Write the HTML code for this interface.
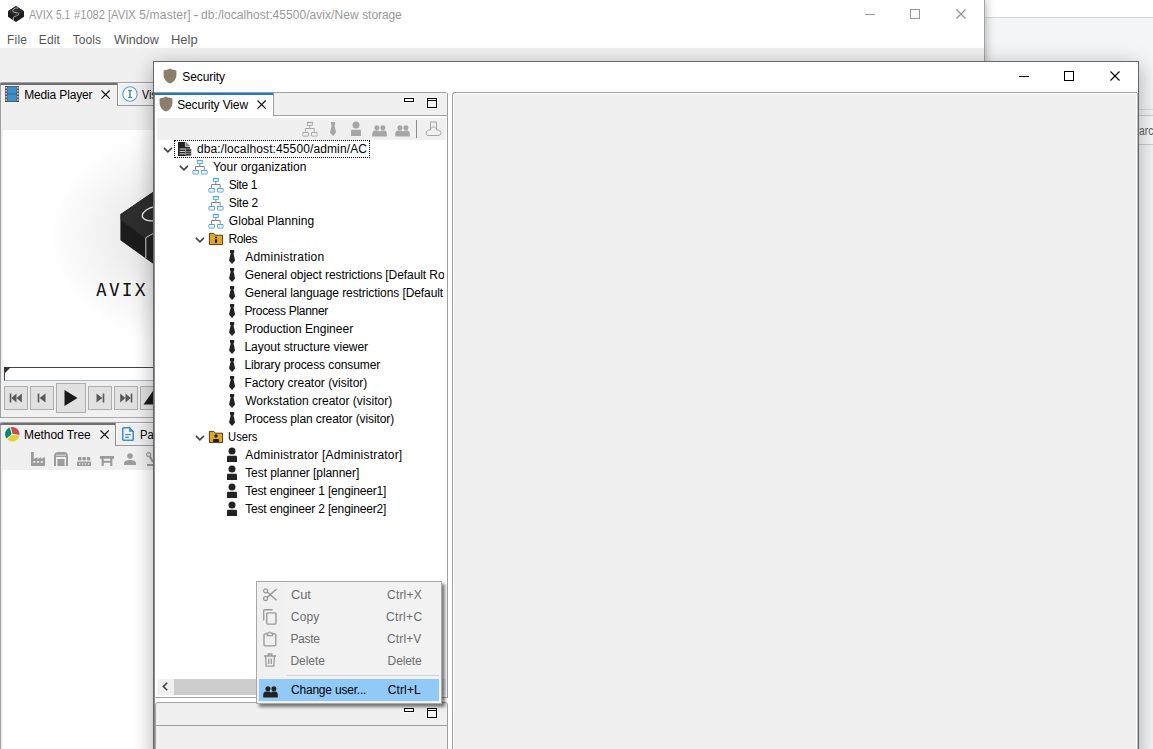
<!DOCTYPE html>
<html lang="en"><head><meta charset="utf-8"><title>AVIX Security</title>
<style>
html,body{margin:0;padding:0}
body{width:1153px;height:749px;overflow:hidden;position:relative;background:#f4f5f7;font-family:"Liberation Sans", sans-serif;font-size:12px}
div,span,svg{position:absolute;box-sizing:border-box}
.t{white-space:pre;line-height:18px;height:18px}
.i{overflow:visible}
.clip{overflow:hidden}
</style></head>
<body>
<div style="left:985px;top:0;width:168px;height:17px;background:#fff"></div>
<div style="left:985px;top:17px;width:168px;height:1px;background:#d6d6d6"></div>
<div style="left:1139px;top:109px;width:14px;height:1px;background:#dcdcdc"></div>
<div style="left:1139px;top:115px;width:14px;height:30px;background:#f8f9fa;border-top:1px solid #cfcfcf;border-bottom:1px solid #cfcfcf"></div>
<span class="t " style="left:1139.49px;transform-origin:0 0;transform:scaleX(0.8581);top:121.5px;color:#5f6368;font-size:12px;">arc</span>
<div id="main" style="left:0;top:0;width:985px;height:760px;background:#f0f0f0;border-right:1px solid #a2a2a2;box-shadow:0 0 10px rgba(0,0,0,.35)">
<div style="left:0;top:0;width:984px;height:48px;background:#fff"></div>
<svg class="i" style="left:8px;top:6px" width="16" height="16" viewBox="0 0 16 16" ><path d="M8 0 L16 5.2 V10.8 L8 16 L0 10.8 V5.2Z" fill="#1c1c1c"/><path d="M8 0 L16 5.2 L8 10.6 L0 5.2Z" fill="#2e2e2e"/><path d="M10.2 2.2 C7.5 1.4 4.4 3.4 4.8 5.2 C5.2 7 10.6 6.2 10.8 7.9 C11 9.6 7 10 5.4 11.3 V14.2" stroke="#c8c8c8" stroke-width="0.8" fill="none"/></svg>
<span class="t " style="left:29.21px;transform-origin:0 0;transform:scaleX(0.9027);top:5.5px;color:#999;font-size:12px;">AVIX </span>
<span class="t " style="left:56.09px;transform-origin:0 0;transform:scaleX(0.8380);top:5.5px;color:#999;font-size:12px;">5.1 </span>
<span class="t " style="left:73.66px;transform-origin:0 0;transform:scaleX(0.9300);top:5.5px;color:#999;font-size:12px;">#1082 </span>
<span class="t " style="left:108.45px;transform-origin:0 0;transform:scaleX(0.9331);top:5.5px;color:#999;font-size:12px;">[AVIX </span>
<span class="t " style="left:139.27px;letter-spacing:0.175px;top:5.5px;color:#999;font-size:12px;">5/master] </span>
<span class="t " style="left:193.35px;transform-origin:0 0;transform:scaleX(1.4109);top:5.5px;color:#999;font-size:12px;">- </span>
<span class="t " style="left:201.12px;letter-spacing:0.050px;top:5.5px;color:#999;font-size:12px;">db:/localhost:45500/avix/New </span>
<span class="t " style="left:362.19px;letter-spacing:-0.073px;top:5.5px;color:#999;font-size:12px;">storage</span>
<div style="left:865px;top:14px;width:10px;height:1px;background:#999"></div>
<div style="left:910px;top:9px;width:10px;height:10px;border:1px solid #999"></div>
<svg class="i" style="left:956px;top:9px" width="10" height="10" viewBox="0 0 10 10" ><path d="M0.5 0.5 L9.5 9.5 M9.5 0.5 L0.5 9.5" stroke="#8e8e8e" stroke-width="1.1" fill="none"/></svg>
<span class="t " style="left:7.08px;letter-spacing:0.186px;top:30.5px;color:#565656;font-size:12px;">File</span>
<span class="t " style="left:38.78px;letter-spacing:0.148px;top:30.5px;color:#565656;font-size:12px;">Edit</span>
<span class="t " style="left:72.67px;letter-spacing:0.063px;top:30.5px;color:#565656;font-size:12px;">Tools</span>
<span class="t " style="left:113.70px;transform-origin:0 0;transform:scaleX(1.0512);top:30.5px;color:#565656;font-size:12px;">Window</span>
<span class="t " style="left:171.29px;transform-origin:0 0;transform:scaleX(1.0796);top:30.5px;color:#565656;font-size:12px;">Help</span>
<div style="left:0px;top:82px;width:990px;height:336px;border-left:1px solid #a0a0a0;border-bottom:1px solid #a8a8a8;border-top:1px solid #a0a0a0;border-radius:2px 0 0 0;background:#f0f0f0"></div>
<div style="left:0px;top:83px;width:117px;height:2px;background:#6e6e6e;border-radius:2px 0 0 0"></div>
<div style="left:117px;top:83px;width:880px;height:23px;border-left:1px solid #8e8e8e;border-bottom:1px solid #9a9a9a;background:#f0f0f0"><div style="left:0;top:0;width:880px;height:1px;background:#fbfbfb"></div><div style="left:0;top:0;width:1px;height:22px;background:#fbfbfb"></div></div>
<svg class="i" style="left:5px;top:86px" width="14" height="16" viewBox="0 0 14 16" ><rect x="0" y="0" width="14" height="16" fill="#555"/><rect x="2.5" y="0.8" width="9" height="6.8" fill="#3a8fcd"/><rect x="2.5" y="8.4" width="9" height="6.8" fill="#3a8fcd"/><g fill="#ddd"><rect x="0.6" y="1" width="1.2" height="1.6"/><rect x="0.6" y="4" width="1.2" height="1.6"/><rect x="0.6" y="7" width="1.2" height="1.6"/><rect x="0.6" y="10" width="1.2" height="1.6"/><rect x="0.6" y="13" width="1.2" height="1.6"/><rect x="12.2" y="1" width="1.2" height="1.6"/><rect x="12.2" y="4" width="1.2" height="1.6"/><rect x="12.2" y="7" width="1.2" height="1.6"/><rect x="12.2" y="10" width="1.2" height="1.6"/><rect x="12.2" y="13" width="1.2" height="1.6"/></g></svg>
<span class="t " style="left:24.18px;letter-spacing:-0.149px;top:85.5px;color:#000;font-size:12px;">Media Player</span>
<svg class="i" style="left:101px;top:90px" width="9.2" height="9.2" viewBox="0 0 9.2 9.2" ><path d="M0.5 0.5 L8.7 8.7 M8.7 0.5 L0.5 8.7" stroke="#111" stroke-width="1.2" fill="none"/></svg>
<svg class="i" style="left:122px;top:86px" width="16" height="16" viewBox="0 0 16 16" ><circle cx="8" cy="8" r="7.2" fill="#fff" stroke="#5a9fd6" stroke-width="1.1"/><path d="M6 4.5 H10 M6 11.5 H10" stroke="#3a88cb" stroke-width="1"/><path d="M8 4.5 V11.5" stroke="#3a88cb" stroke-width="1.5"/></svg>
<span class="t " style="left:141.71px;transform-origin:0 0;transform:scaleX(0.8832);top:85.5px;color:#000;font-size:12px;">Vis</span>
<div style="left:3px;top:130px;width:990px;height:237px;background:radial-gradient(ellipse 132px 108px at 177px 106px,#e2e2e2 0%,#e6e6e6 25%,#f4f4f4 65%,#fff 100%)"></div>
<svg class="i" style="left:120px;top:185px" width="34" height="85" viewBox="0 0 34 85" ><path d="M1.2 29.6 L34 7.2 V78.4 L1.2 54.8Z" fill="#1c1c1c" stroke="#1c1c1c" stroke-width="1.6" stroke-linejoin="round"/><path d="M1.2 29.6 L34 7.2 V48 L25.8 52.7 L1.2 34.4Z" fill="#2e2e2e" stroke="#2e2e2e" stroke-width="1.2" stroke-linejoin="round"/><path d="M25.8 52.7 L34 48 V78.4 L25.8 73.2Z" fill="#242424"/><path d="M25.8 73 V52.7 L34 48" stroke="#dcdcdc" stroke-width="1" fill="none"/><path d="M34 21.6 C28 23 22.4 27 22.2 30.6 C22.1 34.2 28 36.6 34 35.6" stroke="#f4f4f4" stroke-width="1.25" fill="none"/></svg>
<span class="t" style="left:96px;top:280.4px;font-family:'DejaVu Sans Mono',monospace;font-size:17.8px;letter-spacing:2.2px;color:#111;line-height:20px;height:20px">AVIX 5</span>
<div style="left:4px;top:367px;width:990px;height:14px;background:#fff;border-top:1px solid #444;border-left:1px solid #444;border-bottom:1px solid #a9b9cc"></div>
<svg class="i" style="left:4px;top:367px" width="7" height="7" viewBox="0 0 7 7" ><path d="M0 0 H7 L0 7Z" fill="#333"/></svg>
<div style="left:4px;top:386px;width:24px;height:24px;background:#e1e1e1;border:1px solid #adadad"></div>
<svg class="i" style="left:4px;top:386px" width="24" height="24" viewBox="0 0 24 24" ><path d="M6.5 7.5 V16.5" stroke="#585858" stroke-width="1.6"/><path d="M12.5 7.5 V16.5 L7.3 12Z M17.8 7.5 V16.5 L12.6 12Z" fill="#585858"/></svg>
<div style="left:30px;top:386px;width:24px;height:24px;background:#e1e1e1;border:1px solid #adadad"></div>
<svg class="i" style="left:30px;top:386px" width="24" height="24" viewBox="0 0 24 24" ><path d="M8.5 7.5 V16.5" stroke="#585858" stroke-width="1.6"/><path d="M15.5 7.5 V16.5 L9.6 12Z" fill="#585858"/></svg>
<div style="left:56px;top:383px;width:30px;height:30px;background:#e1e1e1;border:1px solid #adadad"></div>
<svg class="i" style="left:56px;top:383px" width="30" height="30" viewBox="0 0 30 30" ><path d="M8.5 7 V23 L21.5 15Z" fill="#1a1a1a"/></svg>
<div style="left:88px;top:386px;width:24px;height:24px;background:#e1e1e1;border:1px solid #adadad"></div>
<svg class="i" style="left:88px;top:386px" width="24" height="24" viewBox="0 0 24 24" ><path d="M15.5 7.5 V16.5" stroke="#585858" stroke-width="1.6"/><path d="M8.5 7.5 V16.5 L14.4 12Z" fill="#585858"/></svg>
<div style="left:114px;top:386px;width:24px;height:24px;background:#e1e1e1;border:1px solid #adadad"></div>
<svg class="i" style="left:114px;top:386px" width="24" height="24" viewBox="0 0 24 24" ><path d="M17.5 7.5 V16.5" stroke="#585858" stroke-width="1.6"/><path d="M6.2 7.5 V16.5 L11.4 12Z M11.5 7.5 V16.5 L16.7 12Z" fill="#585858"/></svg>
<div style="left:140px;top:386px;width:24px;height:24px;background:#e1e1e1;border:1px solid #adadad"></div>
<svg class="i" style="left:140px;top:386px" width="24" height="24" viewBox="0 0 24 24" ><path d="M3.5 18.5 L13 5 L22.5 18.5Z" fill="#1a1a1a"/></svg>
<div style="left:0px;top:422px;width:990px;height:340px;border-left:1px solid #a0a0a0;border-top:1px solid #a0a0a0;border-radius:2px 0 0 0;background:#f0f0f0"></div>
<div style="left:0px;top:423px;width:115px;height:2px;background:#6e6e6e;border-radius:2px 0 0 0"></div>
<div style="left:115px;top:423px;width:880px;height:23px;border-left:1px solid #8e8e8e;border-bottom:1px solid #9a9a9a;background:#f0f0f0"><div style="left:0;top:0;width:880px;height:1px;background:#fbfbfb"></div><div style="left:0;top:0;width:1px;height:22px;background:#fbfbfb"></div></div>
<svg class="i" style="left:4.8px;top:426.9px" width="15" height="15" viewBox="0 0 15 15" ><path d="M7.3 7.2 L5.15 0.33 A7.2 7.2 0 0 1 14.37 8.54Z" fill="#cf4a50"/><path d="M7.3 7.2 L14.37 8.54 A7.2 7.2 0 0 1 1.95 12.02Z" fill="#e8cf2b"/><path d="M7.3 7.2 L1.95 12.02 A7.2 7.2 0 0 1 5.15 0.33Z" fill="#0b8a6b"/><path d="M7.3 7.2 L5.15 0.33 M7.3 7.2 L14.37 8.54 M7.3 7.2 L1.95 12.02 " stroke="#f4f4f4" stroke-width="1.1" fill="none"/></svg>
<span class="t " style="left:24.08px;letter-spacing:-0.074px;top:425.5px;color:#000;font-size:12px;">Method Tree</span>
<svg class="i" style="left:99.5px;top:430.3px" width="9.2" height="9.2" viewBox="0 0 9.2 9.2" ><path d="M0.5 0.5 L8.7 8.7 M8.7 0.5 L0.5 8.7" stroke="#111" stroke-width="1.2" fill="none"/></svg>
<svg class="i" style="left:122px;top:427px" width="12" height="14" viewBox="0 0 12 14" ><path d="M1.6 0.75 H7.4 L11.25 4.6 V12.4 C11.25 12.9 10.9 13.25 10.4 13.25 H1.6 C1.1 13.25 0.75 12.9 0.75 12.4 V1.6 C0.75 1.1 1.1 0.75 1.6 0.75Z" fill="none" stroke="#3a8dcc" stroke-width="1.5"/><path d="M7.2 0.9 V4.8 H11.1Z" fill="#3a8dcc"/><path d="M3.2 7.6 H8.8 M3.2 10.4 H6.8" stroke="#3a8dcc" stroke-width="1.2"/></svg>
<span class="t " style="left:139.96px;transform-origin:0 0;transform:scaleX(0.9320);top:425.5px;color:#000;font-size:12px;">Pa</span>
<svg class="i" style="left:31px;top:452px" width="14" height="14" viewBox="0 0 14 14" ><path d="M0 14 V0 H2.8 V7 L6.4 5 V7 L10.2 5 V7 L14 5 V14Z" fill="#9c9c9c"/><g fill="#f0f0f0"><rect x="2.4" y="9" width="1.8" height="1.8"/><rect x="6.1" y="9" width="1.8" height="1.8"/><rect x="9.8" y="9" width="1.8" height="1.8"/></g></svg>
<svg class="i" style="left:54px;top:452px" width="14" height="14" viewBox="0 0 14 14" ><path d="M0 14 V4 C0 1.5 2 0 4 0 H10 C12 0 14 1.5 14 4 V14 H12 V5 H2 V14Z" fill="#9c9c9c"/><rect x="3.4" y="7" width="7.2" height="7" fill="#9c9c9c"/><path d="M2 3.2 H12" stroke="#f0f0f0" stroke-width="0.8"/></svg>
<svg class="i" style="left:77px;top:457px" width="14" height="9" viewBox="0 0 14 9" ><g fill="#9c9c9c"><rect x="1" y="0" width="3.4" height="3.4"/><rect x="5.4" y="0" width="3.4" height="3.4"/><rect x="9.8" y="0" width="3.4" height="3.4"/><rect x="0" y="4.6" width="14" height="4.4"/></g><g fill="#f0f0f0"><rect x="2" y="6.2" width="1.2" height="1.4"/><rect x="5" y="6.2" width="1.2" height="1.4"/><rect x="8" y="6.2" width="1.2" height="1.4"/><rect x="11" y="6.2" width="1.2" height="1.4"/></g></svg>
<svg class="i" style="left:100px;top:456px" width="14" height="10" viewBox="0 0 14 10" ><path d="M0 0 H14 V2.8 H12.4 V10 H10.2 V6.8 H3.8 V10 H1.6 V2.8 H0Z M3.8 2.8 V4.8 H10.2 V2.8Z" fill="#9c9c9c" fill-rule="evenodd"/></svg>
<svg class="i" style="left:124px;top:453px" width="12" height="12" viewBox="0 0 12 12" ><circle cx="6" cy="3" r="2.8" fill="#9c9c9c"/><path d="M0 12 V10.4 C0 8.2 3 7 6 7 C9 7 12 8.2 12 10.4 V12Z" fill="#9c9c9c"/></svg>
<svg class="i" style="left:146px;top:452px" width="12" height="14" viewBox="0 0 12 14" ><circle cx="2.6" cy="2.6" r="2" fill="none" stroke="#9c9c9c" stroke-width="1.2"/><path d="M3.6 4 L7 10 M1 13 H12" stroke="#9c9c9c" stroke-width="2"/></svg>
<div style="left:3px;top:470px;width:990px;height:300px;background:#fff"></div>
</div>
<div id="sec" style="left:153px;top:61px;width:986px;height:700px;background:#fff;border:1px solid #666;box-shadow:0 5px 20px rgba(0,0,0,.32)"></div>
<div style="left:154px;top:92px;width:1px;height:700px;background:#8c8c8c"></div>
<div style="left:1137px;top:93px;width:1px;height:700px;background:#bdbdbd"></div>
<svg class="i" style="left:163px;top:68px" width="14" height="16" viewBox="0 0 14 16" ><path d="M7 0.6 C5 1.6 3 2.2 0.6 2.4 V7 C0.6 11 3.2 14 7 15.6 C10.8 14 13.4 11 13.4 7 V2.4 C11 2.2 9 1.6 7 0.6Z" fill="#8c7f69"/></svg>
<span class="t " style="left:182.20px;letter-spacing:-0.059px;top:67.5px;color:#000;font-size:12px;">Security</span>
<div style="left:1019px;top:76px;width:10px;height:1px;background:#000"></div>
<div style="left:1064px;top:71px;width:10px;height:10px;border:1px solid #000"></div>
<svg class="i" style="left:1110px;top:71px" width="10" height="10" viewBox="0 0 10 10" ><path d="M0.5 0.5 L9.5 9.5 M9.5 0.5 L0.5 9.5" stroke="#000" stroke-width="1.1" fill="none"/></svg>
<div style="left:155px;top:92px;width:293px;height:606px;border:1px solid #a0a0a0;border-left-color:#fff;border-radius:0 3px 0 0;background:#fff"></div>
<div style="left:156px;top:93px;width:291px;height:23px;background:#f0f0f0;border-bottom:1px solid #a0a0a0"></div>
<div style="left:155px;top:92px;width:119px;height:24px;background:#fff;border-right:1px solid #a0a0a0"></div>
<div style="left:154px;top:92px;width:120px;height:1px;background:#a29d95"></div>
<div style="left:154px;top:93px;width:119px;height:2px;background:#1b76d2"></div>
<svg class="i" style="left:159px;top:96px" width="14" height="16" viewBox="0 0 14 16" ><path d="M7 0.6 C5 1.6 3 2.2 0.6 2.4 V7 C0.6 11 3.2 14 7 15.6 C10.8 14 13.4 11 13.4 7 V2.4 C11 2.2 9 1.6 7 0.6Z" fill="#8c7f69"/></svg>
<span class="t " style="left:177.20px;letter-spacing:-0.135px;top:95.5px;color:#000;font-size:12px;">Security View</span>
<svg class="i" style="left:257px;top:99.7px" width="9.2" height="9.2" viewBox="0 0 9.2 9.2" ><path d="M0.5 0.5 L8.7 8.7 M8.7 0.5 L0.5 8.7" stroke="#111" stroke-width="1.2" fill="none"/></svg>
<div style="left:404px;top:98px;width:10px;height:4px;border:1px solid #000;background:#fff;box-shadow:0 0 0 1px rgba(255,255,255,.6)"></div>
<div style="left:427px;top:98px;width:10px;height:10px;border:1px solid #000;background:#f4f4f4;box-shadow:0 0 0 1px rgba(255,255,255,.6)"><div style="left:0;top:0;width:8px;height:1px;background:#fff"></div><div style="left:0;top:1px;width:8px;height:1px;background:#000"></div></div>
<div style="left:157px;top:118px;width:289px;height:22px;background:#f0f0f0"></div>
<svg class="i" style="left:302px;top:121px" width="16" height="16" viewBox="0 0 16 16" ><path d="M7.8 4.6 V7.5 M3.5 10.8 V7.5 H12.2 V10.8" stroke="#a6a6a6" stroke-width="1" fill="none"/><rect x="5.3" y="1.5" width="5" height="3" fill="#f0f0f0" stroke="#a6a6a6" stroke-width="0.9"/><path d="M4.9 1.5 H10.7" stroke="#a6a6a6" stroke-width="1.3"/><rect x="0.9" y="11.5" width="5.6" height="3.6" rx="0.4" fill="#f0f0f0" stroke="#a6a6a6" stroke-width="0.9"/><rect x="9.5" y="11.5" width="5.6" height="3.6" rx="0.4" fill="#f0f0f0" stroke="#a6a6a6" stroke-width="0.9"/><path d="M0.9 11.5 H6.5 M9.5 11.5 H15.1" stroke="#a6a6a6" stroke-width="1.2"/></svg>
<svg class="i" style="left:325px;top:121px" width="16" height="16" viewBox="0 0 16 16" ><path d="M6 0.9 H10.2 V3.5 L9.5 4.4 L11 11 C11 11.6 10.8 11.9 10.5 12.3 L8.05 14.9 L5.6 12.3 C5.3 11.9 5.1 11.6 5.1 11 L6.7 4.4 L6 3.5Z" fill="#a6a6a6"/></svg>
<svg class="i" style="left:348px;top:121px" width="16" height="16" viewBox="0 0 16 16" ><circle cx="8" cy="3.9" r="3.5" fill="#a6a6a6"/><path d="M3 15 V9.9 C3 9.1 3.6 8.7 4.3 8.7 H11.7 C12.4 8.7 13 9.1 13 9.9 V15Z" fill="#a6a6a6"/></svg>
<svg class="i" style="left:371.7px;top:124.6px" width="15" height="12" viewBox="0 0 15 12" ><circle cx="4.9" cy="2.7" r="2.5" fill="#a6a6a6"/><circle cx="10.9" cy="2.7" r="2.5" fill="#a6a6a6"/><path d="M0.2 11.6 V9 C0.2 7 1.4 5.6 3 5.6 H6 C7 5.6 7.7 6.2 8 7 C8.3 6.2 9 5.6 10 5.6 H12.4 C13.8 5.6 14.8 7 14.8 9 V11.6Z" fill="#a6a6a6"/></svg>
<svg class="i" style="left:394.7px;top:124.6px" width="15" height="12" viewBox="0 0 15 12" ><circle cx="4.9" cy="2.7" r="2.5" fill="#a6a6a6"/><circle cx="10.9" cy="2.7" r="2.5" fill="#a6a6a6"/><path d="M0.2 11.6 V9 C0.2 7 1.4 5.6 3 5.6 H6 C7 5.6 7.7 6.2 8 7 C8.3 6.2 9 5.6 10 5.6 H12.4 C13.8 5.6 14.8 7 14.8 9 V11.6Z" fill="#a6a6a6"/></svg>
<div style="left:416px;top:120px;width:1px;height:18px;background:#8c8c8c"></div>
<svg class="i" style="left:425px;top:121px" width="16" height="16" viewBox="0 0 16 16" ><path d="M5.5 9 V1 H11.5 V9" fill="none" stroke="#a6a6a6" stroke-width="1"/><path d="M8.5 6 C6.5 6 5.8 7.4 5.4 8.8 C2.6 9 1 10.4 1 12 C1 13.6 2.2 14.5 4 14.5 H13 C14.8 14.5 16 13.6 16 12 C16 10.4 14.4 9 11.6 8.8 C11.2 7.4 10.5 6 8.5 6Z" fill="#f0f0f0" stroke="#a6a6a6" stroke-width="1"/></svg>
<div class="clip" style="left:0;top:0;width:444px;height:678px">
<div style="left:174px;top:140px;width:196px;height:18px;border:1px dotted #000"></div>
<svg class="i" style="left:162.5px;top:146.5px" width="10" height="6" viewBox="0 0 10 6" ><path d="M0.9 0.9 L4.9 4.9 L8.9 0.9" stroke="#404040" stroke-width="1.5" fill="none"/></svg>
<svg class="i" style="left:176px;top:141px" width="16" height="16" viewBox="0 0 16 16" ><path d="M2 1 H9.6 L14 5.4 V15 H2Z" fill="#232323"/><path d="M9.6 1 V5.4 H14Z" fill="#8a8a8a"/><path d="M9.4 0.8 V5.6 H14.2" fill="none" stroke="#fff" stroke-width="0.7"/><path d="M3.6 8 H10 M3.6 10.4 H9 M3.6 12.8 H9" stroke="#f4f4f4" stroke-width="0.9"/><path d="M9.6 8.6 C9.6 7.6 15.4 7.6 15.4 8.6 V14 C15.4 15.2 9.6 15.2 9.6 14Z" fill="#2a2a2a" stroke="#fff" stroke-width="0.5"/><path d="M9.8 10.2 C10.8 11 14.2 11 15.2 10.2 M9.8 12.2 C10.8 13 14.2 13 15.2 12.2" stroke="#bbb" stroke-width="0.7" fill="none"/></svg>
<span class="t " style="left:196.92px;letter-spacing:0.116px;top:140px;color:#000;font-size:12px;">dba:/localhost:45500/admin/AC</span>
<svg class="i" style="left:178.5px;top:164.5px" width="10" height="6" viewBox="0 0 10 6" ><path d="M0.9 0.9 L4.9 4.9 L8.9 0.9" stroke="#404040" stroke-width="1.5" fill="none"/></svg>
<svg class="i" style="left:192px;top:159px" width="16" height="16" viewBox="0 0 16 16" ><path d="M7.8 4.6 V7.5 M3.5 10.8 V7.5 H12.2 V10.8" stroke="#858585" stroke-width="1" fill="none"/><rect x="5.3" y="1.5" width="5" height="3" fill="#eef6fc" stroke="#5aa3dc" stroke-width="0.9"/><path d="M4.9 1.5 H10.7" stroke="#5aa3dc" stroke-width="1.3"/><rect x="0.9" y="11.5" width="5.6" height="3.6" rx="0.4" fill="#eef6fc" stroke="#5aa3dc" stroke-width="0.9"/><rect x="9.5" y="11.5" width="5.6" height="3.6" rx="0.4" fill="#eef6fc" stroke="#5aa3dc" stroke-width="0.9"/><path d="M0.9 11.5 H6.5 M9.5 11.5 H15.1" stroke="#5aa3dc" stroke-width="1.2"/></svg>
<span class="t " style="left:212.90px;letter-spacing:0.033px;top:158px;color:#000;font-size:12px;">Your organization</span>
<svg class="i" style="left:208px;top:177px" width="16" height="16" viewBox="0 0 16 16" ><path d="M7.8 4.6 V7.5 M3.5 10.8 V7.5 H12.2 V10.8" stroke="#858585" stroke-width="1" fill="none"/><rect x="5.3" y="1.5" width="5" height="3" fill="#eef6fc" stroke="#5aa3dc" stroke-width="0.9"/><path d="M4.9 1.5 H10.7" stroke="#5aa3dc" stroke-width="1.3"/><rect x="0.9" y="11.5" width="5.6" height="3.6" rx="0.4" fill="#eef6fc" stroke="#5aa3dc" stroke-width="0.9"/><rect x="9.5" y="11.5" width="5.6" height="3.6" rx="0.4" fill="#eef6fc" stroke="#5aa3dc" stroke-width="0.9"/><path d="M0.9 11.5 H6.5 M9.5 11.5 H15.1" stroke="#5aa3dc" stroke-width="1.2"/></svg>
<span class="t " style="left:228.70px;letter-spacing:-0.369px;top:176px;color:#000;font-size:12px;">Site 1</span>
<svg class="i" style="left:208px;top:195px" width="16" height="16" viewBox="0 0 16 16" ><path d="M7.8 4.6 V7.5 M3.5 10.8 V7.5 H12.2 V10.8" stroke="#858585" stroke-width="1" fill="none"/><rect x="5.3" y="1.5" width="5" height="3" fill="#eef6fc" stroke="#5aa3dc" stroke-width="0.9"/><path d="M4.9 1.5 H10.7" stroke="#5aa3dc" stroke-width="1.3"/><rect x="0.9" y="11.5" width="5.6" height="3.6" rx="0.4" fill="#eef6fc" stroke="#5aa3dc" stroke-width="0.9"/><rect x="9.5" y="11.5" width="5.6" height="3.6" rx="0.4" fill="#eef6fc" stroke="#5aa3dc" stroke-width="0.9"/><path d="M0.9 11.5 H6.5 M9.5 11.5 H15.1" stroke="#5aa3dc" stroke-width="1.2"/></svg>
<span class="t " style="left:228.70px;letter-spacing:-0.243px;top:194px;color:#000;font-size:12px;">Site 2</span>
<svg class="i" style="left:208px;top:213px" width="16" height="16" viewBox="0 0 16 16" ><path d="M7.8 4.6 V7.5 M3.5 10.8 V7.5 H12.2 V10.8" stroke="#858585" stroke-width="1" fill="none"/><rect x="5.3" y="1.5" width="5" height="3" fill="#eef6fc" stroke="#5aa3dc" stroke-width="0.9"/><path d="M4.9 1.5 H10.7" stroke="#5aa3dc" stroke-width="1.3"/><rect x="0.9" y="11.5" width="5.6" height="3.6" rx="0.4" fill="#eef6fc" stroke="#5aa3dc" stroke-width="0.9"/><rect x="9.5" y="11.5" width="5.6" height="3.6" rx="0.4" fill="#eef6fc" stroke="#5aa3dc" stroke-width="0.9"/><path d="M0.9 11.5 H6.5 M9.5 11.5 H15.1" stroke="#5aa3dc" stroke-width="1.2"/></svg>
<span class="t " style="left:228.84px;letter-spacing:0.038px;top:212px;color:#000;font-size:12px;">Global Planning</span>
<svg class="i" style="left:194.5px;top:236.5px" width="10" height="6" viewBox="0 0 10 6" ><path d="M0.9 0.9 L4.9 4.9 L8.9 0.9" stroke="#404040" stroke-width="1.5" fill="none"/></svg>
<svg class="i" style="left:208px;top:231px" width="16" height="16" viewBox="0 0 16 16" ><path d="M1.4 2.4 H5.8 L7.4 4.2 H14.6 V13.6 H1.4Z" fill="#dfa82c" stroke="#3a2e10" stroke-width="0.9" stroke-linejoin="round"/><circle cx="8" cy="6.6" r="1" fill="#1a1a1a"/><path d="M7.3 7.9 H8.7 L9.2 10.9 L8 12.3 L6.8 10.9Z" fill="#1a1a1a"/></svg>
<span class="t " style="left:228.38px;letter-spacing:-0.384px;top:230px;color:#000;font-size:12px;">Roles</span>
<svg class="i" style="left:224px;top:249px" width="16" height="16" viewBox="0 0 16 16" ><path d="M6 0.9 H10.2 V3.5 L9.5 4.4 L11 11 C11 11.6 10.8 11.9 10.5 12.3 L8.05 14.9 L5.6 12.3 C5.3 11.9 5.1 11.6 5.1 11 L6.7 4.4 L6 3.5Z" fill="#222"/></svg>
<span class="t " style="left:245.18px;letter-spacing:0.227px;top:248px;color:#000;font-size:12px;">Administration</span>
<svg class="i" style="left:224px;top:267px" width="16" height="16" viewBox="0 0 16 16" ><path d="M6 0.9 H10.2 V3.5 L9.5 4.4 L11 11 C11 11.6 10.8 11.9 10.5 12.3 L8.05 14.9 L5.6 12.3 C5.3 11.9 5.1 11.6 5.1 11 L6.7 4.4 L6 3.5Z" fill="#222"/></svg>
<span class="t " style="left:244.84px;letter-spacing:-0.079px;top:266px;color:#000;font-size:12px;">General object restrictions [Default Role]</span>
<svg class="i" style="left:224px;top:285px" width="16" height="16" viewBox="0 0 16 16" ><path d="M6 0.9 H10.2 V3.5 L9.5 4.4 L11 11 C11 11.6 10.8 11.9 10.5 12.3 L8.05 14.9 L5.6 12.3 C5.3 11.9 5.1 11.6 5.1 11 L6.7 4.4 L6 3.5Z" fill="#222"/></svg>
<span class="t " style="left:244.84px;letter-spacing:-0.084px;top:284px;color:#000;font-size:12px;">General language restrictions [Default Role]</span>
<svg class="i" style="left:224px;top:303px" width="16" height="16" viewBox="0 0 16 16" ><path d="M6 0.9 H10.2 V3.5 L9.5 4.4 L11 11 C11 11.6 10.8 11.9 10.5 12.3 L8.05 14.9 L5.6 12.3 C5.3 11.9 5.1 11.6 5.1 11 L6.7 4.4 L6 3.5Z" fill="#222"/></svg>
<span class="t " style="left:244.38px;letter-spacing:-0.296px;top:302px;color:#000;font-size:12px;">Process Planner</span>
<svg class="i" style="left:224px;top:321px" width="16" height="16" viewBox="0 0 16 16" ><path d="M6 0.9 H10.2 V3.5 L9.5 4.4 L11 11 C11 11.6 10.8 11.9 10.5 12.3 L8.05 14.9 L5.6 12.3 C5.3 11.9 5.1 11.6 5.1 11 L6.7 4.4 L6 3.5Z" fill="#222"/></svg>
<span class="t " style="left:244.38px;letter-spacing:0.001px;top:320px;color:#000;font-size:12px;">Production Engineer</span>
<svg class="i" style="left:224px;top:339px" width="16" height="16" viewBox="0 0 16 16" ><path d="M6 0.9 H10.2 V3.5 L9.5 4.4 L11 11 C11 11.6 10.8 11.9 10.5 12.3 L8.05 14.9 L5.6 12.3 C5.3 11.9 5.1 11.6 5.1 11 L6.7 4.4 L6 3.5Z" fill="#222"/></svg>
<span class="t " style="left:244.38px;letter-spacing:-0.015px;top:338px;color:#000;font-size:12px;">Layout structure viewer</span>
<svg class="i" style="left:224px;top:357px" width="16" height="16" viewBox="0 0 16 16" ><path d="M6 0.9 H10.2 V3.5 L9.5 4.4 L11 11 C11 11.6 10.8 11.9 10.5 12.3 L8.05 14.9 L5.6 12.3 C5.3 11.9 5.1 11.6 5.1 11 L6.7 4.4 L6 3.5Z" fill="#222"/></svg>
<span class="t " style="left:244.38px;letter-spacing:-0.093px;top:356px;color:#000;font-size:12px;">Library process consumer</span>
<svg class="i" style="left:224px;top:375px" width="16" height="16" viewBox="0 0 16 16" ><path d="M6 0.9 H10.2 V3.5 L9.5 4.4 L11 11 C11 11.6 10.8 11.9 10.5 12.3 L8.05 14.9 L5.6 12.3 C5.3 11.9 5.1 11.6 5.1 11 L6.7 4.4 L6 3.5Z" fill="#222"/></svg>
<span class="t " style="left:244.38px;letter-spacing:-0.017px;top:374px;color:#000;font-size:12px;">Factory creator (visitor)</span>
<svg class="i" style="left:224px;top:393px" width="16" height="16" viewBox="0 0 16 16" ><path d="M6 0.9 H10.2 V3.5 L9.5 4.4 L11 11 C11 11.6 10.8 11.9 10.5 12.3 L8.05 14.9 L5.6 12.3 C5.3 11.9 5.1 11.6 5.1 11 L6.7 4.4 L6 3.5Z" fill="#222"/></svg>
<span class="t " style="left:245.22px;letter-spacing:0.021px;top:392px;color:#000;font-size:12px;">Workstation creator (visitor)</span>
<svg class="i" style="left:224px;top:411px" width="16" height="16" viewBox="0 0 16 16" ><path d="M6 0.9 H10.2 V3.5 L9.5 4.4 L11 11 C11 11.6 10.8 11.9 10.5 12.3 L8.05 14.9 L5.6 12.3 C5.3 11.9 5.1 11.6 5.1 11 L6.7 4.4 L6 3.5Z" fill="#222"/></svg>
<span class="t " style="left:244.38px;letter-spacing:-0.099px;top:410px;color:#000;font-size:12px;">Process plan creator (visitor)</span>
<svg class="i" style="left:194.5px;top:434.5px" width="10" height="6" viewBox="0 0 10 6" ><path d="M0.9 0.9 L4.9 4.9 L8.9 0.9" stroke="#404040" stroke-width="1.5" fill="none"/></svg>
<svg class="i" style="left:208px;top:429px" width="16" height="16" viewBox="0 0 16 16" ><path d="M1.4 2.4 H5.8 L7.4 4.2 H14.6 V13.6 H1.4Z" fill="#dfa82c" stroke="#3a2e10" stroke-width="0.9" stroke-linejoin="round"/><circle cx="8" cy="7" r="1.7" fill="#222"/><path d="M5 13 V10.6 C5 10.2 5.3 9.9 5.7 9.9 H10.3 C10.7 9.9 11 10.2 11 10.6 V13Z" fill="#222"/></svg>
<span class="t " style="left:228.38px;transform-origin:0 0;transform:scaleX(0.9378);top:428px;color:#000;font-size:12px;">Users</span>
<svg class="i" style="left:224px;top:447px" width="16" height="16" viewBox="0 0 16 16" ><circle cx="8" cy="3.9" r="3.5" fill="#222"/><path d="M3 15 V9.9 C3 9.1 3.6 8.7 4.3 8.7 H11.7 C12.4 8.7 13 9.1 13 9.9 V15Z" fill="#222"/></svg>
<span class="t " style="left:245.18px;letter-spacing:0.202px;top:446px;color:#000;font-size:12px;">Administrator [Administrator]</span>
<svg class="i" style="left:224px;top:465px" width="16" height="16" viewBox="0 0 16 16" ><circle cx="8" cy="3.9" r="3.5" fill="#222"/><path d="M3 15 V9.9 C3 9.1 3.6 8.7 4.3 8.7 H11.7 C12.4 8.7 13 9.1 13 9.9 V15Z" fill="#222"/></svg>
<span class="t " style="left:245.17px;letter-spacing:-0.064px;top:464px;color:#000;font-size:12px;">Test planner [planner]</span>
<svg class="i" style="left:224px;top:483px" width="16" height="16" viewBox="0 0 16 16" ><circle cx="8" cy="3.9" r="3.5" fill="#222"/><path d="M3 15 V9.9 C3 9.1 3.6 8.7 4.3 8.7 H11.7 C12.4 8.7 13 9.1 13 9.9 V15Z" fill="#222"/></svg>
<span class="t " style="left:245.17px;letter-spacing:-0.163px;top:482px;color:#000;font-size:12px;">Test engineer 1 [engineer1]</span>
<svg class="i" style="left:224px;top:501px" width="16" height="16" viewBox="0 0 16 16" ><circle cx="8" cy="3.9" r="3.5" fill="#222"/><path d="M3 15 V9.9 C3 9.1 3.6 8.7 4.3 8.7 H11.7 C12.4 8.7 13 9.1 13 9.9 V15Z" fill="#222"/></svg>
<span class="t " style="left:245.17px;letter-spacing:-0.163px;top:500px;color:#000;font-size:12px;">Test engineer 2 [engineer2]</span>
</div>
<div style="left:157px;top:679px;width:289px;height:16px;background:#f0f0f0"></div>
<div style="left:174px;top:679px;width:150px;height:16px;background:#cdcdcd"></div>
<svg class="i" style="left:162px;top:682px" width="6" height="9" viewBox="0 0 6 9" ><path d="M5.2 0.8 L1.4 4.5 L5.2 8.2" stroke="#404040" stroke-width="1.6" fill="none"/></svg>
<div style="left:155px;top:702px;width:293px;height:60px;border:1px solid #a0a0a0;border-radius:3px 3px 0 0;background:#f0f0f0"></div>
<div style="left:155px;top:725px;width:293px;height:1px;background:#a0a0a0"></div>
<div style="left:404px;top:708px;width:10px;height:4px;border:1px solid #000;background:#fff;box-shadow:0 0 0 1px rgba(255,255,255,.6)"></div>
<div style="left:427px;top:708px;width:10px;height:10px;border:1px solid #000;background:#f4f4f4;box-shadow:0 0 0 1px rgba(255,255,255,.6)"><div style="left:0;top:0;width:8px;height:1px;background:#fff"></div><div style="left:0;top:1px;width:8px;height:1px;background:#000"></div></div>
<div style="left:452px;top:92px;width:685px;height:670px;border-top:1px solid #a0a0a0;border-left:1px solid #a0a0a0;border-radius:3px 0 0 0;background:#fff"></div>
<div style="left:454px;top:94px;width:682px;height:670px;background:#f0f0f0"></div>
<div style="left:256px;top:581px;width:186px;height:123px;background:#f2f2f2;border:1px solid #a8a8a8;box-shadow:3px 3px 3px rgba(0,0,0,.5)"></div>
<div style="left:257px;top:582px;width:30px;height:121px;background:#f0f0f0"></div>
<div style="left:287px;top:675px;width:152px;height:1px;background:#d0d0d0"></div>
<div style="left:259px;top:679px;width:180px;height:22px;background:#91c9f7"></div>
<span class="t " style="left:290.80px;transform-origin:0 0;transform:scaleX(1.0665);top:585.5px;color:#6d6d6d;font-size:12px;">Cut</span>
<span class="t " style="left:387.04px;letter-spacing:0.189px;top:585.5px;color:#6d6d6d;font-size:12px;">Ctrl+X</span>
<span class="t " style="left:290.84px;letter-spacing:0.139px;top:607.5px;color:#6d6d6d;font-size:12px;">Copy</span>
<span class="t " style="left:386.04px;letter-spacing:0.337px;top:607.5px;color:#6d6d6d;font-size:12px;">Ctrl+C</span>
<span class="t " style="left:290.38px;letter-spacing:-0.282px;top:629.5px;color:#6d6d6d;font-size:12px;">Paste</span>
<span class="t " style="left:387.04px;letter-spacing:0.133px;top:629.5px;color:#6d6d6d;font-size:12px;">Ctrl+V</span>
<span class="t " style="left:290.38px;letter-spacing:-0.026px;top:651.5px;color:#6d6d6d;font-size:12px;">Delete</span>
<span class="t " style="left:387.58px;letter-spacing:-0.106px;top:651.5px;color:#6d6d6d;font-size:12px;">Delete</span>
<span class="t " style="left:291.04px;letter-spacing:-0.211px;top:681px;color:#000;font-size:12px;">Change user...</span>
<span class="t " style="left:387.64px;letter-spacing:0.155px;top:681px;color:#000;font-size:12px;">Ctrl+L</span>
<svg class="i" style="left:263px;top:588px" width="14" height="14" viewBox="0 0 14 14" ><circle cx="2.6" cy="2.8" r="2" fill="none" stroke="#9b9b9b" stroke-width="1.3"/><circle cx="2.6" cy="10.6" r="2" fill="none" stroke="#9b9b9b" stroke-width="1.3"/><path d="M4.2 4 L13.6 12.2 M4.2 9.4 L13.6 1" stroke="#9b9b9b" stroke-width="1.5" fill="none"/></svg>
<svg class="i" style="left:263px;top:609px" width="14" height="16" viewBox="0 0 14 16" ><path d="M0.7 11.4 V1.4 C0.7 1 1 0.7 1.4 0.7 H9.6" fill="none" stroke="#9b9b9b" stroke-width="1.4"/><rect x="3.7" y="3.9" width="9.3" height="11.2" rx="1.1" fill="none" stroke="#9b9b9b" stroke-width="1.4"/></svg>
<svg class="i" style="left:263px;top:631px" width="14" height="16" viewBox="0 0 14 16" ><rect x="1" y="2.9" width="11.8" height="12" rx="1.1" fill="none" stroke="#9b9b9b" stroke-width="1.4"/><path d="M4.2 4.6 V2.2 H5.6 C5.8 0.6 8 0.6 8.2 2.2 H9.6 V4.6Z" fill="#f0f0f0" stroke="#9b9b9b" stroke-width="1.2"/></svg>
<svg class="i" style="left:264px;top:653px" width="12" height="14" viewBox="0 0 12 14" ><path d="M0 3 H12 M4.2 2.6 V1 H7.8 V2.6 M1.6 3.4 L2.2 13.2 H9.8 L10.4 3.4 M4.7 5.6 V11 M7.3 5.6 V11" fill="none" stroke="#9b9b9b" stroke-width="1.3"/></svg>
<svg class="i" style="left:263px;top:685.6px" width="15" height="12" viewBox="0 0 15 12" ><circle cx="4.9" cy="2.7" r="2.5" fill="#222"/><circle cx="10.9" cy="2.7" r="2.5" fill="#222"/><path d="M0.2 11.6 V9 C0.2 7 1.4 5.6 3 5.6 H6 C7 5.6 7.7 6.2 8 7 C8.3 6.2 9 5.6 10 5.6 H12.4 C13.8 5.6 14.8 7 14.8 9 V11.6Z" fill="#222"/></svg>
</body></html>
